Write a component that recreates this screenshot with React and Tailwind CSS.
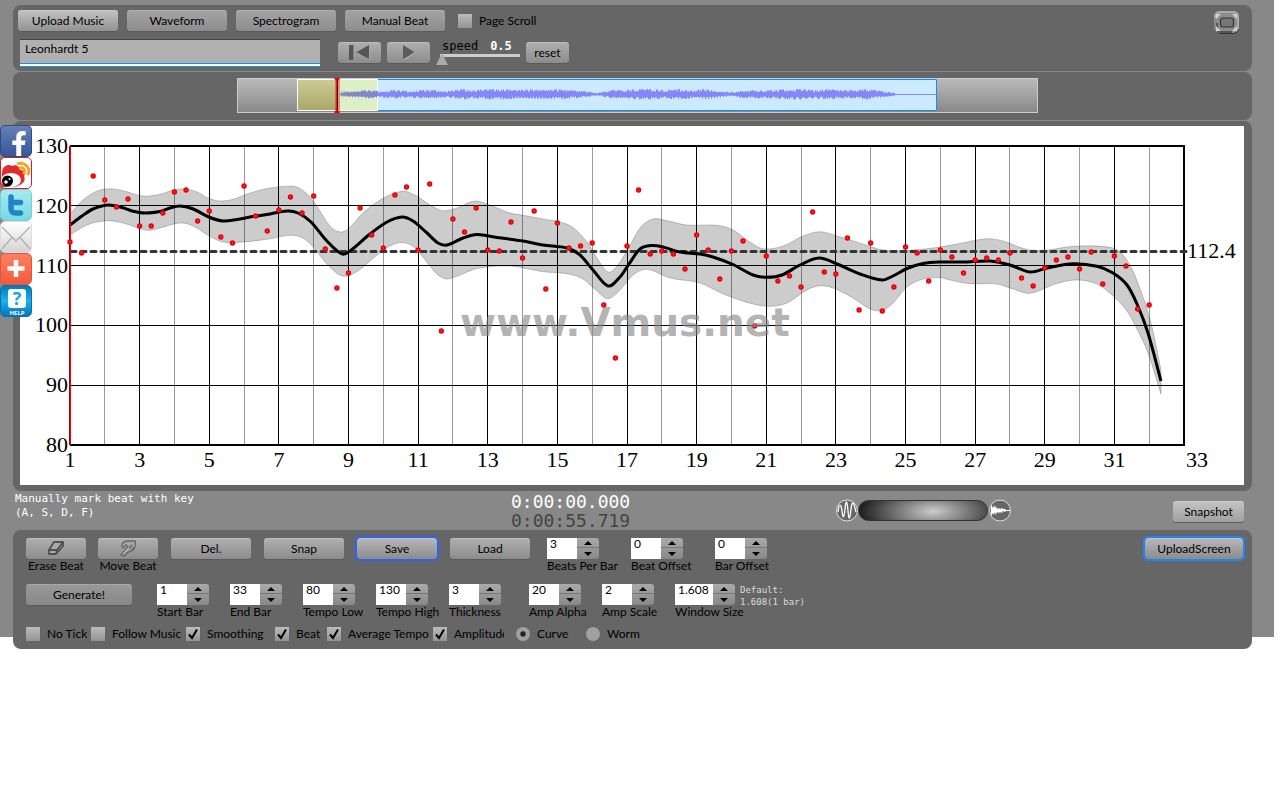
import { useState } from 'react';
import clsx from 'clsx';
import { FaFacebookF } from 'react-icons/fa';

const STEP = 1114 / 96;

// One value per beat, three beats to the bar
const beats = [
    242, 253, 176, 200, 207, 199, 226, 226, 213, 192, 190, 221, 211, 237, 243, 186,
    216, 231, 210, 197, 213, 196, 249, 288, 273, 208, 235, 248, 195, 187, 250, 184,
    331, 219, 232, 208, 250, 251, 222, 258, 211, 289, 223, 248, 246, 243, 305, 358,
    246, 190, 254, 251, 254, 269, 235, 250, 279, 251, 241, 326, 256, 281, 276, 287,
    212, 272, 274, 238, 310, 243, 311, 287, 247, 253, 281, 250, 257, 273, 260, 258,
    260, 253, 278, 286, 268, 260, 257, 269, 252, 284, 256, 266, 309, 305,
];

const smooth = [
    [70, 225], [82, 216], [93, 209], [108, 205], [122, 207.5], [132, 211], [145, 213], [160, 211.5],
    [170, 208], [180, 206], [192, 208.5], [210, 217.5], [223, 221], [237, 219.5], [250, 217], [267, 214.5],
    [287, 211], [298, 213], [311, 222], [326, 240], [342, 254], [350, 251], [370, 234],
    [387, 222], [402, 217], [413, 221], [427, 233], [438, 243], [447, 245], [463, 238], [477, 234.5],
    [497, 237.5], [523, 241], [543, 245], [567, 248], [580, 255], [593, 270], [608, 286], [620, 277],
    [629, 264], [640, 249], [652, 245.5], [663, 247], [680, 252], [700, 254], [713, 257], [733, 264.5],
    [753, 275], [767, 277.3], [782, 275], [800, 265], [819, 258], [837, 264], [860, 274],
    [882, 280], [893, 276], [907, 268.5], [923, 263.5], [940, 262], [963, 262], [990, 261], [1010, 265],
    [1030, 272], [1047, 268], [1073, 263.7], [1097, 266.3], [1113, 273], [1127, 285], [1137, 304],
    [1148, 333], [1161, 381],
];

const upper = [
    [70, 214], [83, 200], [97, 191], [110, 188.7], [123, 190.7], [143, 196], [160, 194.3], [173, 190],
    [185, 189], [197, 192], [208, 198], [220, 201], [233, 199.3], [250, 193], [270, 188], [293, 186.3],
    [303, 190.5], [314, 202], [330, 226], [340, 232], [348, 229], [363, 213], [380, 200], [402, 191.3],
    [415, 195], [430, 205], [443, 210.7], [457, 208], [474, 201], [487, 204], [510, 213], [523, 215.3],
    [543, 219], [560, 222], [573, 227.5], [587, 242], [597, 258], [608, 272], [617, 266], [628, 249],
    [640, 228], [653, 219], [667, 220.7], [687, 225], [717, 225.3], [733, 230], [747, 240], [763, 248.7],
    [783, 246], [803, 236], [820, 231.7], [837, 236], [860, 243], [883, 250], [913, 250], [940, 247],
    [957, 244], [987, 238.7], [1003, 241], [1027, 249.5], [1047, 250], [1073, 246.3], [1110, 247.3],
    [1122, 254], [1132, 269], [1143, 297], [1152, 327], [1161, 370],
];

const lower = [
    [70, 235], [87, 225], [107, 220.7], [123, 223], [147, 230.3], [160, 228], [180, 223], [193, 226],
    [210, 236.5], [223, 242], [240, 242.3], [267, 239.3], [290, 235.3], [303, 238], [314, 248], [327, 264],
    [342, 276], [357, 271.5], [377, 255], [390, 246], [403, 242.5], [415, 248], [430, 266], [438, 275],
    [447, 279], [460, 275], [477, 268.5], [510, 266], [543, 271.7], [567, 273.7], [583, 279], [597, 291],
    [608, 298.7], [620, 290], [633, 275], [647, 269.3], [670, 278], [700, 283], [723, 294], [753, 304],
    [770, 306.3], [787, 303], [807, 290], [820, 285.7], [833, 288], [853, 298], [870, 309], [883, 310.3],
    [893, 303], [907, 287], [923, 279], [940, 277.7], [950, 280], [970, 283.7], [997, 284], [1013, 289],
    [1030, 293.3], [1057, 283.5], [1077, 280], [1097, 284], [1113, 296], [1127, 311], [1137, 329],
    [1148, 353], [1161, 394],
];

// Cubic segments whose slope at a point is the slope between its neighbours
const spline = (pts) => {
    const slope = (i) => {
        const a = pts[Math.max(0, i - 1)];
        const b = pts[Math.min(pts.length - 1, i + 1)];
        return (b[1] - a[1]) / (b[0] - a[0]);
    };
    let d = '';
    for (let i = 0; i < pts.length - 1; i++) {
        const [x0, y0] = pts[i];
        const [x1, y1] = pts[i + 1];
        const h = (x1 - x0) / 3;
        d += ` C${x0 + h} ${y0 + slope(i) * h} ${x1 - h} ${y1 - slope(i + 1) * h} ${x1} ${y1}`;
    }
    return d;
};

const band = `M70 214${spline(upper)} L1161 394${spline([...lower].reverse())} Z`;

const TempoChart = () => (
    <svg viewBox="20 126 1224 359" className="block w-full bg-white" role="img" aria-label="Tempo curve">
        {/* Grid */}
        {Array.from({ length: 31 }, (_, i) => {
            const x = Math.floor(70 + (i + 1) * STEP * 3) + 0.5;
            return <path key={i} d={`M${x} 146V445`} stroke={i % 2 ? '#000' : '#999'} />;
        })}
        {[205.5, 265.5, 325.5, 385.5].map((y) => (
            <path key={y} d={`M70 ${y}H1184`} stroke="#000" />
        ))}
        <path d="M70 146H1184V445H70" fill="none" stroke="#000" strokeWidth="2" />

        {/* Amplitude band, average and smoothed tempo */}
        <path d={band} fill="#000" fillOpacity="0.2" stroke="#000" strokeOpacity="0.2" />
        <path d="M71 251.500H1186" stroke="#333" strokeWidth="3" strokeDasharray="5 5" strokeLinecap="round" />
        <path d={`M70 225${spline(smooth)}`} fill="none" stroke="#000" strokeWidth="3" />
        <path d="M70 146V445" stroke="#f00" strokeWidth="2" />
        <path d="M69.500 146V445" stroke="#900" strokeWidth="1" />

        {beats.map((y, i) => (
            <circle key={i} cx={70 + i * STEP} cy={y} r="1.700" fill="#c66" stroke="#f00008" strokeWidth="2" />
        ))}

        {/* Axis labels */}
        <g fontFamily="Liberation Serif, serif" fontSize="22">
            {[130, 120, 110, 100, 90, 80].map((v, i) => (
                <text key={v} x="68" y={153 + i * 60 - (i > 2 ? 1 : 0)} textAnchor="end">{v}</text>
            ))}
            {Array.from({ length: 17 }, (_, i) => (
                <text key={i} x={i === 16 ? 1197 : 70 + i * STEP * 6} y="467" textAnchor="middle">{i * 2 + 1}</text>
            ))}
            <text x="1187" y="258">112.4</text>
        </g>
        <text x="460" y="336" fontFamily="DejaVu Sans, sans-serif" fontSize="39" fontWeight="bold" fill="#888" fillOpacity="0.65">
            www.Vmus.net
        </text>
    </svg>
);

const envelope = [1, 3, 4, 3, 4, 3, 4, 4, 3, 5, 4, 5, 5, 4, 5, 4, 5, 4, 3, 1, 4, 4, 5, 5, 4, 5, 4, 5, 3, 2, 4, 4, 4, 5, 5, 4, 5, 4, 4, 5, 3, 1];

const wave = Array.from({ length: 555 }, (_, i) => {
    const p = (i / 555) * 41;
    const k = Math.floor(p);
    const amp = envelope[k] + (envelope[k + 1] - envelope[k]) * (p - k);
    const up = 0.75 + 0.25 * Math.sin(i * i * 1.3);
    const down = 0.75 + 0.25 * Math.sin(i * i * 2.1 + 1);
    return `M${i + 103.5} ${16 - amp * up}V${16.5 + amp * down}`;
}).join('');

const Overview = () => (
    <svg width="801" height="35" role="img" aria-label="Track overview" className="block">
        <defs>
            <linearGradient id="track" x2="0" y2="1">
                <stop stopColor="#bbb" />
                <stop offset="1" stopColor="#888" />
            </linearGradient>
            <linearGradient id="khaki" x2="0" y2="1">
                <stop stopColor="#cccb92" />
                <stop offset="1" stopColor="#a9a76c" />
            </linearGradient>
        </defs>
        <rect x="0.500" y="0.500" width="800" height="34" fill="url(#track)" stroke="#ccc" />
        <rect x="60" y="1" width="640" height="32" fill="#cceaff" />
        <path d="M141 1.500H699.500V32.500H141" fill="none" stroke="#0e93ec" />
        <rect x="60.500" y="1.500" width="40" height="31" fill="url(#khaki)" />
        <rect x="101" y="1.500" width="40" height="31" fill="#ddefc4" />
        <path d="M140.500 1.500H60.500V32.500H140.500Z" fill="none" stroke="#fff" />
        <path d={wave} stroke="#8487fa" />
        <path d="M655 16.500H699" stroke="#8487fa" />
        <path d="M104 16H140" stroke="#7f8a8c" strokeOpacity="0.5" strokeWidth="5" />
        <path d="M100.500 1V33" stroke="#f00" strokeOpacity="0.4" strokeWidth="5" />
        <path d="M99.500 1V33" stroke="#d22" />
        <path d="M100.500 1V33" stroke="#400" />
        <path d="M97 0h6l-2 3h-2zM97 35h6l-2-3h-2z" fill="#e00" />
    </svg>
);

const Button = ({ className, children, ...props }) => (
    <button
        type="button"
        className={clsx(
            'flex h-[21px] shrink-0 items-center justify-center rounded-[3px] bg-linear-to-b shadow-[inset_0_1px_0_rgba(255,255,255,0.15),0_1px_0_#5a5a5a]',
            className,
        )}
        {...props}
    >
        {children}
    </button>
);

const Check = ({ label, className, defaultChecked }) => (
    <label className={clsx('flex items-center gap-[7px] overflow-hidden whitespace-nowrap', className)}>
        <span className="relative h-[14px] w-[14px] shrink-0">
            <input
                type="checkbox"
                defaultChecked={defaultChecked}
                className="peer block h-[14px] w-[14px] appearance-none bg-linear-to-b from-[#bbb] to-[#949494]"
            />
            <svg viewBox="0 0 14 14" className="pointer-events-none absolute inset-0 hidden peer-checked:block">
                <path d="M3 7.500L6 11L11 2.500" fill="none" stroke="#000" strokeWidth="2" />
            </svg>
        </span>
        {label}
    </label>
);

const Radio = ({ label, className, defaultChecked }) => (
    <label className={clsx('flex items-center gap-[7px]', className)}>
        <input
            type="radio"
            name="style"
            defaultChecked={defaultChecked}
            className="h-[14px] w-[14px] appearance-none rounded-full bg-[#a0a0a0] checked:bg-radial checked:from-[#222] checked:from-20% checked:to-[#a0a0a0] checked:to-35%"
        />
        {label}
    </label>
);

const Stepper = ({ label, value, className, wide }) => {
    const [val, setVal] = useState(value);
    const id = label.toLowerCase().replace(/ /g, '-');
    const bump = (by) => setVal(String(Number(val) + by));

    return (
        <div className={clsx('shrink-0', className)}>
            <div className="flex h-[21px]">
                <input
                    id={id}
                    value={val}
                    onChange={(e) => setVal(e.target.value)}
                    className={clsx('bg-white pb-2.5 pl-[3px] outline-none', wide ? 'w-[38px]' : 'w-[30px]')}
                />
                <div className="flex w-[22px] flex-col overflow-hidden rounded-r-[3px] bg-linear-to-b from-[#aaa] to-[#888]">
                    <button type="button" aria-label={`Increase ${label}`} onClick={() => bump(1)} className="flex h-[10px] items-center justify-center border-b border-[#777]">
                        <svg width="8" height="4"><path d="M0 4L4 0L8 4Z" /></svg>
                    </button>
                    <button type="button" aria-label={`Decrease ${label}`} onClick={() => bump(-1)} className="flex h-[11px] items-center justify-center">
                        <svg width="8" height="4"><path d="M0 0L4 4L8 0Z" /></svg>
                    </button>
                </div>
            </div>
            <label htmlFor={id} className="block leading-[14px] whitespace-nowrap">{label}</label>
        </div>
    );
};

const SocialBar = () => (
    <nav aria-label="Share" className="absolute top-[125px] left-0 flex w-8 flex-col">
        <a href="#facebook" aria-label="Facebook" className="flex h-8 items-end justify-end rounded-[5px] border border-[#2f4b85] bg-linear-to-b from-[#6580b8] to-[#38569a] pr-1 text-white">
            <FaFacebookF className="h-[25px] w-[16px]" />
        </a>
        <a href="#weibo" aria-label="Weibo" className="h-8 overflow-hidden rounded-[5px] border border-[#c22] bg-white">
            <svg viewBox="1 1 30 30">
                <path d="M2 15C3 8 9 7 12 9C15 7 20 9 20 13C26 13 26 17 24 19C27 25 20 30 11 30H1Z" fill="#e32b2b" />
                <ellipse cx="11" cy="23" rx="10" ry="7" fill="#fff" />
                <circle cx="7.500" cy="24" r="5.500" fill="#000" />
                <circle cx="6" cy="25" r="1.800" fill="#fff" />
                <circle cx="9.500" cy="22" r="1" fill="#fff" />
                <path d="M18 6.500C25 5 31 11 28 17M20 11C23.500 10 25.500 13 24 16" fill="none" stroke="#f7a21b" strokeWidth="2.800" strokeLinecap="round" />
            </svg>
        </a>
        <a href="#twitter" aria-label="Twitter" className="h-8 rounded-[5px] border border-[#79cfd6] bg-linear-to-b from-[#a5ecef] to-[#76d9e2]">
            <svg viewBox="1 1 30 30">
                <path d="M11 8V19C11 23 13 24 16 24H20.500M11 13.500H20.500" fill="none" stroke="#2185c5" strokeWidth="5.500" strokeLinecap="round" strokeLinejoin="round" />
            </svg>
        </a>
        <a href="#mail" aria-label="Email" className="h-8 rounded-[5px] border border-[#ddd] bg-linear-to-b from-white to-[#d4d4d4]">
            <svg viewBox="1 1 30 30" fill="none" stroke="#b0b0b0" strokeWidth="1.300">
                <path d="M2 6L16 20L30 6M2 28L12 16.500M30 28L20 16.500" />
            </svg>
        </a>
        <a href="#more" aria-label="More" className="h-8 rounded-[5px] border border-[#dd5838] bg-linear-to-b from-[#ff7f60] to-[#f05b3c]">
            <svg viewBox="1 1 30 30"><path d="M16 7V24M7.500 15.500H24.500" stroke="#fff" strokeWidth="4.500" /></svg>
        </a>
        <a href="#help" aria-label="Help" className="h-8 rounded-[5px] border border-[#0d6ea8] bg-linear-to-b from-[#0879bd] via-[#18b4ec] to-[#0873b4]">
            <svg viewBox="1 1 30 30" fontFamily="Open Sans, sans-serif" fontWeight="bold" textAnchor="middle">
                <rect x="8" y="4" width="18" height="19" rx="3" fill="#fff" />
                <text x="17" y="20" fontSize="18" fill="#16a4df">?</text>
                <text x="17" y="30" fontSize="6" fill="#fff">HELP</text>
            </svg>
        </a>
    </nav>
);

const App = () => {
    const [speed, setSpeed] = useState('0.5');
    const [title, setTitle] = useState('Leonhardt 5');

    return (
        <div className="min-h-screen bg-white font-['Lato',sans-serif] text-[12px] text-black">
            <div className="relative mr-1.5 flex flex-col bg-[#888] pt-[5px] pr-[22px] pl-[13px]">
                {/* Player */}
                <header className="flex h-[66px] justify-between rounded-lg bg-[#666] pt-[5px] pr-3 pl-[5px]">
                    <div>
                        <div className="flex items-center gap-[9px]">
                            <Button className="w-[100px] from-[#c4c4c4] to-[#929292]">Upload Music</Button>
                            <Button className="w-[100px] from-[#a4a4a4] to-[#8d8d8d]">Waveform</Button>
                            <Button className="w-[100px] from-[#a4a4a4] to-[#8d8d8d]">Spectrogram</Button>
                            <Button className="w-[100px] from-[#a4a4a4] to-[#8d8d8d]">Manual Beat</Button>
                            <Check label="Page Scroll" className="ml-1" />
                        </div>
                        <div className="mt-2 flex pl-0.5">
                            <input
                                aria-label="Title"
                                value={title}
                                onChange={(e) => setTitle(e.target.value)}
                                className="h-[28px] w-[300px] border-t border-[#444] bg-[#b0b0b0] px-[5px] pb-2.5 shadow-[inset_0_-1px_0_#0e93ec,inset_0_-3px_0_#fff,inset_0_-4px_0_#0e93ec] outline-none"
                            />
                            <Button aria-label="Rewind" className="mt-[3px] ml-[18px] w-[43px] from-[#b0b0b0] to-[#8c8c8c]">
                                <svg width="21" height="15"><path d="M0 0H5V15H0ZM20 0V15L7 7.500Z" fill="#555" /><path d="M5 0V15M20.500 0V15L8 8" fill="none" stroke="#aaa" /></svg>
                            </Button>
                            <Button aria-label="Play" className="mt-[3px] ml-[6px] w-[43px] from-[#b0b0b0] to-[#8c8c8c]">
                                <svg width="14" height="15"><path d="M1 0V15L13 7.500Z" fill="#5c5c5c" /><path d="M1 15L13 7.500" stroke="#bbb" /></svg>
                            </Button>
                            <label className="ml-[6px] block w-[84px] font-['DejaVu_Sans_Mono',monospace] leading-[14px]">
                                <span className="flex gap-3 pl-[6px]">
                                    speed <b className="text-white">{speed}</b>
                                </span>
                                <input
                                    type="range"
                                    min="0.5"
                                    max="2"
                                    step="0.1"
                                    value={speed}
                                    onChange={(e) => setSpeed(e.target.value)}
                                    className="block h-[12px] w-full appearance-none bg-[linear-gradient(#ccc,#ccc)] bg-[length:80px_3px] bg-[position:4px_1px] bg-no-repeat [&::-webkit-slider-thumb]:h-[12px] [&::-webkit-slider-thumb]:w-[12px] [&::-webkit-slider-thumb]:appearance-none [&::-webkit-slider-thumb]:bg-[#aaa] [&::-webkit-slider-thumb]:[clip-path:polygon(50%_0,100%_100%,0_100%)]"
                                />
                            </label>
                            <Button className="mt-[3px] ml-[6px] w-[43px] from-[#b0b0b0] to-[#8c8c8c]" onClick={() => setSpeed('0.5')}>reset</Button>
                        </div>
                    </div>
                    <button type="button" aria-label="Full screen" className="h-6 w-[27px]">
                        <svg viewBox="0 0 27 24">
                            <rect x="2" y="2" width="24" height="22" rx="6" fill="#333" />
                            <rect x="1" y="1" width="25" height="22" rx="6" fill="#8c8c8c" />
                            <path d="M4 13V19Q5 22 8 22H19" fill="none" stroke="#555" strokeWidth="2" />
                            <path d="M2 8V6Q3 2 7 2H20Q25 2 25 7V19" fill="none" stroke="#aaa" strokeWidth="2" />
                            <rect x="7.500" y="8" width="13" height="9" rx="2.500" fill="#777" stroke="#333" strokeWidth="1.200" />
                            <path d="M3 4H8L3 9ZM24 4H19L24 9ZM3 21H8L3 16ZM24 21H19L24 16Z" fill="#d0d0d0" />
                        </svg>
                    </button>
                </header>

                {/* Overview */}
                <section className="mt-px flex h-[48px] items-start justify-center rounded-lg bg-[#666] pt-1.5 pl-[10px]">
                    <Overview />
                </section>

                {/* Chart */}
                <section className="mt-px rounded-lg bg-[#666] pt-[5px] pr-2 pb-1.5 pl-[7px]">
                    <TempoChart />
                </section>

                <section className="flex h-[39px] items-start pr-2 font-['DejaVu_Sans_Mono',monospace]">
                    <p className="w-[498px] pt-px pl-0.5 text-[11px] leading-[14px] text-white">
                        Manually mark beat with key<br />(A, S, D, F)
                    </p>
                    <div className="w-[325px] pt-px text-[18px] leading-[19px]">
                        <p className="text-white">0:00:00.000</p>
                        <p className="text-[#444]">0:00:55.719</p>
                    </div>
                    <div className="flex items-center pt-2">
                        <svg width="22" height="23" fill="none" stroke="#ddd">
                            <circle cx="11" cy="11.500" r="10.500" fill="#666" />
                            <path d="M2 13C3 4 5 4 6 12S8 20 9 10S11 1 12 12S14 20 15 10S18 4 20 13" stroke="#fff" strokeWidth="1.300" />
                        </svg>
                        <input
                            type="range"
                            aria-label="Zoom"
                            className="h-[21px] w-[130px] appearance-none rounded-full border border-[#333] bg-[radial-gradient(72px_28px_at_58%_55%,#ccc,#222)] [&::-webkit-slider-thumb]:appearance-none"
                        />
                        <svg width="23" height="23">
                            <circle cx="12" cy="11.500" r="10.500" fill="#666" stroke="#ddd" />
                            <path d="M3 6L5 9L6 6L7 9L8 7L9 10L11 9L12 10L14 9L15 10L17 10L18 11H22V12H18L17 13L15 12L14 14L12 13L11 14L9 13L8 16L7 13L6 16L5 14L3 17Z" fill="#fff" />
                        </svg>
                    </div>
                    <Button className="mt-[10px] ml-auto w-[71px] from-[#c4c4c4] to-[#a0a0a0] font-['Lato',sans-serif]">Snapshot</Button>
                </section>

                {/* Settings */}
                <section className="-mb-3 h-[119px] rounded-lg bg-[#666] pt-2 pr-2 pl-[13px]">
                    <div className="flex h-[46px] items-start">
                        <div className="flex gap-3 text-center leading-[14px]">
                            <div className="w-[60px]">
                                <Button aria-labelledby="erase" className="w-full from-[#b0b0b0] to-[#8c8c8c]">
                                    <svg width="18" height="15" fill="#aaa" stroke="#505050" strokeWidth="1.800">
                                        <path d="M7 1H16L10 9H2ZM2 9V13H9L10 9M9 13L16 5V1" strokeLinejoin="round" />
                                    </svg>
                                </Button>
                                <span id="erase" className="whitespace-nowrap">Erase Beat</span>
                            </div>
                            <div className="w-[60px]">
                                <Button aria-labelledby="move" className="w-full from-[#b0b0b0] to-[#8c8c8c]">
                                    <svg width="17" height="17" fill="none" stroke="#666" strokeWidth="1.300">
                                        <path d="M3 8C0 5 3 1 8 1H15C16 4 15 8 13 10C11 12 9 11 7 13L4 16L1 15L5 10L8 7L6 5L3 8ZM9 9L12 5M12 10L14 7" />
                                        <path d="M3 14L9 8" stroke="#bbb" />
                                    </svg>
                                </Button>
                                <span id="move" className="whitespace-nowrap">Move Beat</span>
                            </div>
                        </div>
                        <div className="ml-[13px] flex gap-[13px]">
                            <Button className="w-[80px] from-[#b0b0b0] to-[#8c8c8c]">Del.</Button>
                            <Button className="w-[80px] from-[#b0b0b0] to-[#8c8c8c]">Snap</Button>
                            <Button className="w-[80px] from-[#b8b8b8] to-[#8c8c8c] outline-2 outline-[#2f62f0]">Save</Button>
                            <Button className="w-[80px] from-[#b0b0b0] to-[#8c8c8c]">Load</Button>
                        </div>
                        <div className="ml-[17px] flex">
                            <Stepper label="Beats Per Bar" value="3" className="w-[84px]" />
                            <Stepper label="Beat Offset" value="0" className="w-[84px]" />
                            <Stepper label="Bar Offset" value="0" className="w-[84px]" />
                        </div>
                        <Button className="mr-px ml-auto w-[98px] from-[#b8b8b8] to-[#8c8c8c] outline-2 outline-[#1f84f5]">UploadScreen</Button>
                    </div>
                    <div className="flex h-[42px] items-start">
                        <Button className="w-[106px] from-[#999] to-[#888]">Generate!</Button>
                        <div className="ml-[25px] flex">
                            <Stepper label="Start Bar" value="1" className="w-[73px]" />
                            <Stepper label="End Bar" value="33" className="w-[73px]" />
                            <Stepper label="Tempo Low" value="80" className="w-[73px]" />
                            <Stepper label="Tempo High" value="130" className="w-[73px]" />
                            <Stepper label="Thickness" value="3" className="w-[73px]" />
                        </div>
                        <div className="ml-[7px] flex">
                            <Stepper label="Amp Alpha" value="20" className="w-[73px]" />
                            <Stepper label="Amp Scale" value="2" className="w-[73px]" />
                            <Stepper label="Window Size" value="1.608" className="w-[65px]" wide />
                        </div>
                        <p className="font-['DejaVu_Sans_Mono',monospace] text-[9px] leading-[12px] text-[#ddd]">
                            Default:<br />1.608(1 bar)
                        </p>
                    </div>
                    <div className="flex items-center leading-[15px]">
                        <Check label="No Tick" className="w-[65px]" />
                        <Check label="Follow Music" className="w-[95px]" />
                        <Check label="Smoothing" className="w-[89px]" defaultChecked />
                        <Check label="Beat" className="w-[52px]" defaultChecked />
                        <Check label="Average Tempo" className="mr-[2px] w-[104px]" defaultChecked />
                        <Check label="Amplitude" className="mr-[12px] w-[71px]" defaultChecked />
                        <Radio label="Curve" className="w-[70px]" defaultChecked />
                        <Radio label="Worm" />
                    </div>
                </section>

                <SocialBar />
            </div>
        </div>
    );
};

export default App;
